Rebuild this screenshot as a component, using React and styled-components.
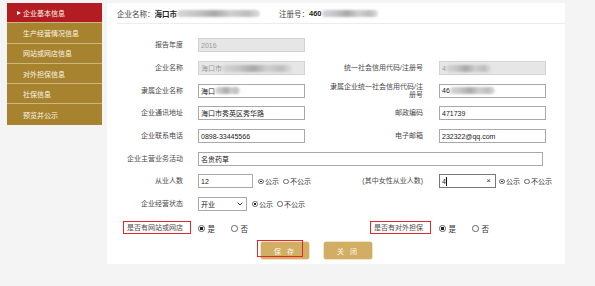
import styled, { createGlobalStyle } from "styled-components"

const GlobalStyle = createGlobalStyle`
  html, body {
    margin: 0;
    padding: 0;
    background: #f4f4f4;
  }
  body {
    font-family: "Liberation Sans", "Noto Sans CJK SC", sans-serif;
    font-size: 7px;
    color: #555;
  }
`

const menu = ["企业基本信息", "生产经营情况信息", "网站或网店信息", "对外担保信息", "社保信息", "预览并公示"]

export default function App() {
    return (
        <Page>
            <GlobalStyle />
            <Sidebar>
                {menu.map((m, i) => (
                    <MenuItem key={m} $active={i === 0}>{m}</MenuItem>
                ))}
            </Sidebar>
            <Main>
                <Header>
                    <HeadItem>
                        企业名称：<b>海口市</b><Blur $w={83} />
                    </HeadItem>
                    <HeadItem $ml={19}>
                        注册号：<b>460</b><Blur $w={56} />
                    </HeadItem>
                </Header>
                <Form>
                    <Row>
                        <Cell>
                            <Label>报告年度</Label>
                            <TextBox $disabled>2016</TextBox>
                        </Cell>
                    </Row>
                    <Row>
                        <Cell>
                            <Label>企业名称</Label>
                            <TextBox $disabled>海口市<Blur $w={70} /></TextBox>
                        </Cell>
                        <Cell $last>
                            <Label $right>统一社会信用代码/注册号</Label>
                            <TextBox $disabled>4<Blur $w={45} /></TextBox>
                        </Cell>
                    </Row>
                    <Row>
                        <Cell>
                            <Label>隶属企业名称</Label>
                            <TextBox>海口<Blur $w={25} /></TextBox>
                        </Cell>
                        <Cell $last>
                            <Label $right $tight>隶属企业统一社会信用代码/注<br />册号</Label>
                            <TextBox>46<Blur $w={45} /></TextBox>
                        </Cell>
                    </Row>
                    <Row>
                        <Cell>
                            <Label>企业通讯地址</Label>
                            <TextBox>海口市秀英区秀华路</TextBox>
                        </Cell>
                        <Cell $last>
                            <Label $right>邮政编码</Label>
                            <TextBox>471739</TextBox>
                        </Cell>
                    </Row>
                    <Row>
                        <Cell>
                            <Label>企业联系电话</Label>
                            <TextBox>0898-33445566</TextBox>
                        </Cell>
                        <Cell $last>
                            <Label $right>电子邮箱</Label>
                            <TextBox>232322@qq.com</TextBox>
                        </Cell>
                    </Row>
                    <Row>
                        <Cell $last>
                            <Label>企业主营业务活动</Label>
                            <TextBox $w={345}>名贵药草</TextBox>
                        </Cell>
                    </Row>
                    <Row>
                        <Cell>
                            <Label>从业人数</Label>
                            <TextBox $w={55}>12</TextBox>
                            <Radios options={["公示", "不公示"]} />
                        </Cell>
                        <Cell $last>
                            <Label $right>(其中女性从业人数)</Label>
                            <TextBox $w={57} $focus>
                                4<Caret />
                                <Clear>×</Clear>
                            </TextBox>
                            <Radios $tight options={["公示", "不公示"]} />
                        </Cell>
                    </Row>
                    <Row>
                        <Cell>
                            <Label>企业经营状态</Label>
                            <Select>
                                开业
                                <svg width="6" height="4" viewBox="0 0 6 4">
                                    <path d="M0.6 0.6 L3 3 L5.4 0.6" fill="none" stroke="#333" strokeWidth="1" />
                                </svg>
                            </Select>
                            <Radios options={["公示", "不公示"]} />
                        </Cell>
                    </Row>
                    <Row $top={1.5}>
                        <Cell>
                            <Label><Marked>是否有网站或网店</Marked></Label>
                            <Radios big options={["是", "否"]} />
                        </Cell>
                        <Cell $last>
                            <Label $right><Marked>是否有对外担保</Marked></Label>
                            <Radios big options={["是", "否"]} />
                        </Cell>
                    </Row>
                    <Buttons>
                        <Button $marked>保 存</Button>
                        <Button>关 闭</Button>
                    </Buttons>
                </Form>
            </Main>
        </Page>
    )
}

function Radios({ options, big, $tight }) {
    return (
        <RadioGroup $big={big} $tight={$tight}>
            {options.map((o, i) => (
                <RadioOption key={o} $big={big}>
                    <Dot $checked={i === 0} $big={big} />
                    {o}
                </RadioOption>
            ))}
        </RadioGroup>
    )
}

const Page = styled.div`
    display: flex;
    align-items: flex-start;
    gap: 5px;
    padding: 3px 0 0 7px;
    height: 283px;
`

const Sidebar = styled.ul`
    list-style: none;
    margin: 0;
    padding: 0;
    width: 95px;
`

const MenuItem = styled.li`
    height: 20.3px;
    box-sizing: border-box;
    display: flex;
    align-items: center;
    padding-left: ${p => (p.$active ? "10px" : "16px")};
    background: ${p => (p.$active ? "#b31c22" : "#a8832f")};
    border-bottom: 1px solid #cfb57e;
    color: #fbf3e4;
    font-size: 7px;

    &:last-child {
        border-bottom: none;
    }

    &::before {
        content: "";
        display: ${p => (p.$active ? "block" : "none")};
        width: 0;
        height: 0;
        border-top: 2.5px solid transparent;
        border-bottom: 2.5px solid transparent;
        border-left: 4px solid #fff;
        margin-right: 2px;
    }
`

const Main = styled.div`
    width: 458px;
    height: 261px;
    background: #fff;
`

const Header = styled.div`
    margin-left: 10px;
    height: 20px;
    border-bottom: 1px solid #ececec;
    display: flex;
    align-items: center;
    font-size: 7.5px;
    color: #444;

    b {
        color: #222;
    }
`

const HeadItem = styled.div`
    display: flex;
    align-items: center;
    margin-left: ${p => p.$ml || 0}px;
`

const Blur = styled.span`
    display: inline-block;
    width: ${p => p.$w}px;
    height: 7px;
    border-radius: 4px;
    background: linear-gradient(90deg, #d6d6d6 0%, #c4c4c4 25%, #a9a9a9 45%, #cfcfcf 65%, #bdbdbd 85%, #dedede 100%);
    filter: blur(1.2px);
`

const Form = styled.div`
    padding-top: 10px;
`

const Row = styled.div`
    display: flex;
    align-items: center;
    height: 22.7px;
    margin-top: ${p => p.$top || 0}px;
`

const Cell = styled.div`
    display: flex;
    align-items: center;
    flex-shrink: 0;
    width: ${p => (p.$last ? "auto" : "223px")};
    white-space: nowrap;
`

const Label = styled.div`
    width: ${p => (p.$right ? 93 : 76)}px;
    flex-shrink: 0;
    margin-right: ${p => (p.$right ? 16 : 15)}px;
    text-align: right;
    line-height: ${p => (p.$tight ? 1.05 : 1.2)};
    color: #4a4a4a;
    white-space: nowrap;
`

const Marked = styled.span`
    position: relative;

    &::after {
        content: "";
        position: absolute;
        left: -4px;
        right: -8px;
        top: -3px;
        bottom: -3px;
        border: 1px solid #e5262d;
    }
`

const TextBox = styled.div`
    position: relative;
    box-sizing: border-box;
    flex-shrink: 0;
    width: ${p => p.$w || 107}px;
    height: 14px;
    padding: 0 2px;
    display: flex;
    align-items: center;
    border: 1px solid ${p => (p.$disabled ? "#d2d2d2" : p.$focus ? "#777" : "#a9a9a9")};
    background: ${p => (p.$disabled ? "#e6e6e6" : "#fff")};
    color: ${p => (p.$disabled ? "#999" : "#222")};
    font-size: 7px;
    overflow: hidden;
`

const Caret = styled.span`
    display: inline-block;
    width: 1px;
    height: 9px;
    background: #111;
`

const Clear = styled.span`
    position: absolute;
    right: 4px;
    top: 1px;
    font-size: 8px;
    color: #333;
`

const Select = styled.div`
    box-sizing: border-box;
    width: 49px;
    height: 14px;
    padding: 0 2px;
    display: flex;
    align-items: center;
    justify-content: space-between;
    border: 1px solid #a9a9a9;
    color: #222;
    font-size: 7px;

    svg {
        margin-right: 1px;
    }
`

const RadioGroup = styled.div`
    display: flex;
    align-items: center;
    gap: ${p => (p.$big ? 16 : 4)}px;
    margin-left: ${p => (p.$big ? 0 : p.$tight ? 3 : 5)}px;
    color: #333;
    font-size: ${p => (p.$big ? 7.5 : 7)}px;
    white-space: nowrap;
`

const RadioOption = styled.span`
    display: flex;
    align-items: center;
    gap: ${p => (p.$big ? 3 : 1.5)}px;
`

const Dot = styled.span`
    box-sizing: border-box;
    width: ${p => (p.$big ? 6.5 : 5.5)}px;
    height: ${p => (p.$big ? 6.5 : 5.5)}px;
    border-radius: 50%;
    border: 0.8px solid #666;
    background: ${p => (p.$checked ? "radial-gradient(circle, #222 0 40%, #fff 45%)" : "#fff")};
`

const Buttons = styled.div`
    display: flex;
    gap: 15px;
    padding-left: 154px;
    margin-top: 2.5px;
`

const Button = styled.div`
    position: relative;
    width: 48px;
    height: 17px;
    display: flex;
    align-items: center;
    justify-content: center;
    background: #d1ae63;
    border-radius: 2px;
    box-shadow: 0 0 0 0.5px #e1c88f;
    color: #fffaf0;
    font-size: 7px;
    letter-spacing: 2px;

    &::after {
        content: "";
        display: ${p => (p.$marked ? "block" : "none")};
        position: absolute;
        left: -4px;
        top: -2px;
        width: 46px;
        height: 17px;
        border: 1px solid #e5262d;
        box-sizing: border-box;
    }
`
